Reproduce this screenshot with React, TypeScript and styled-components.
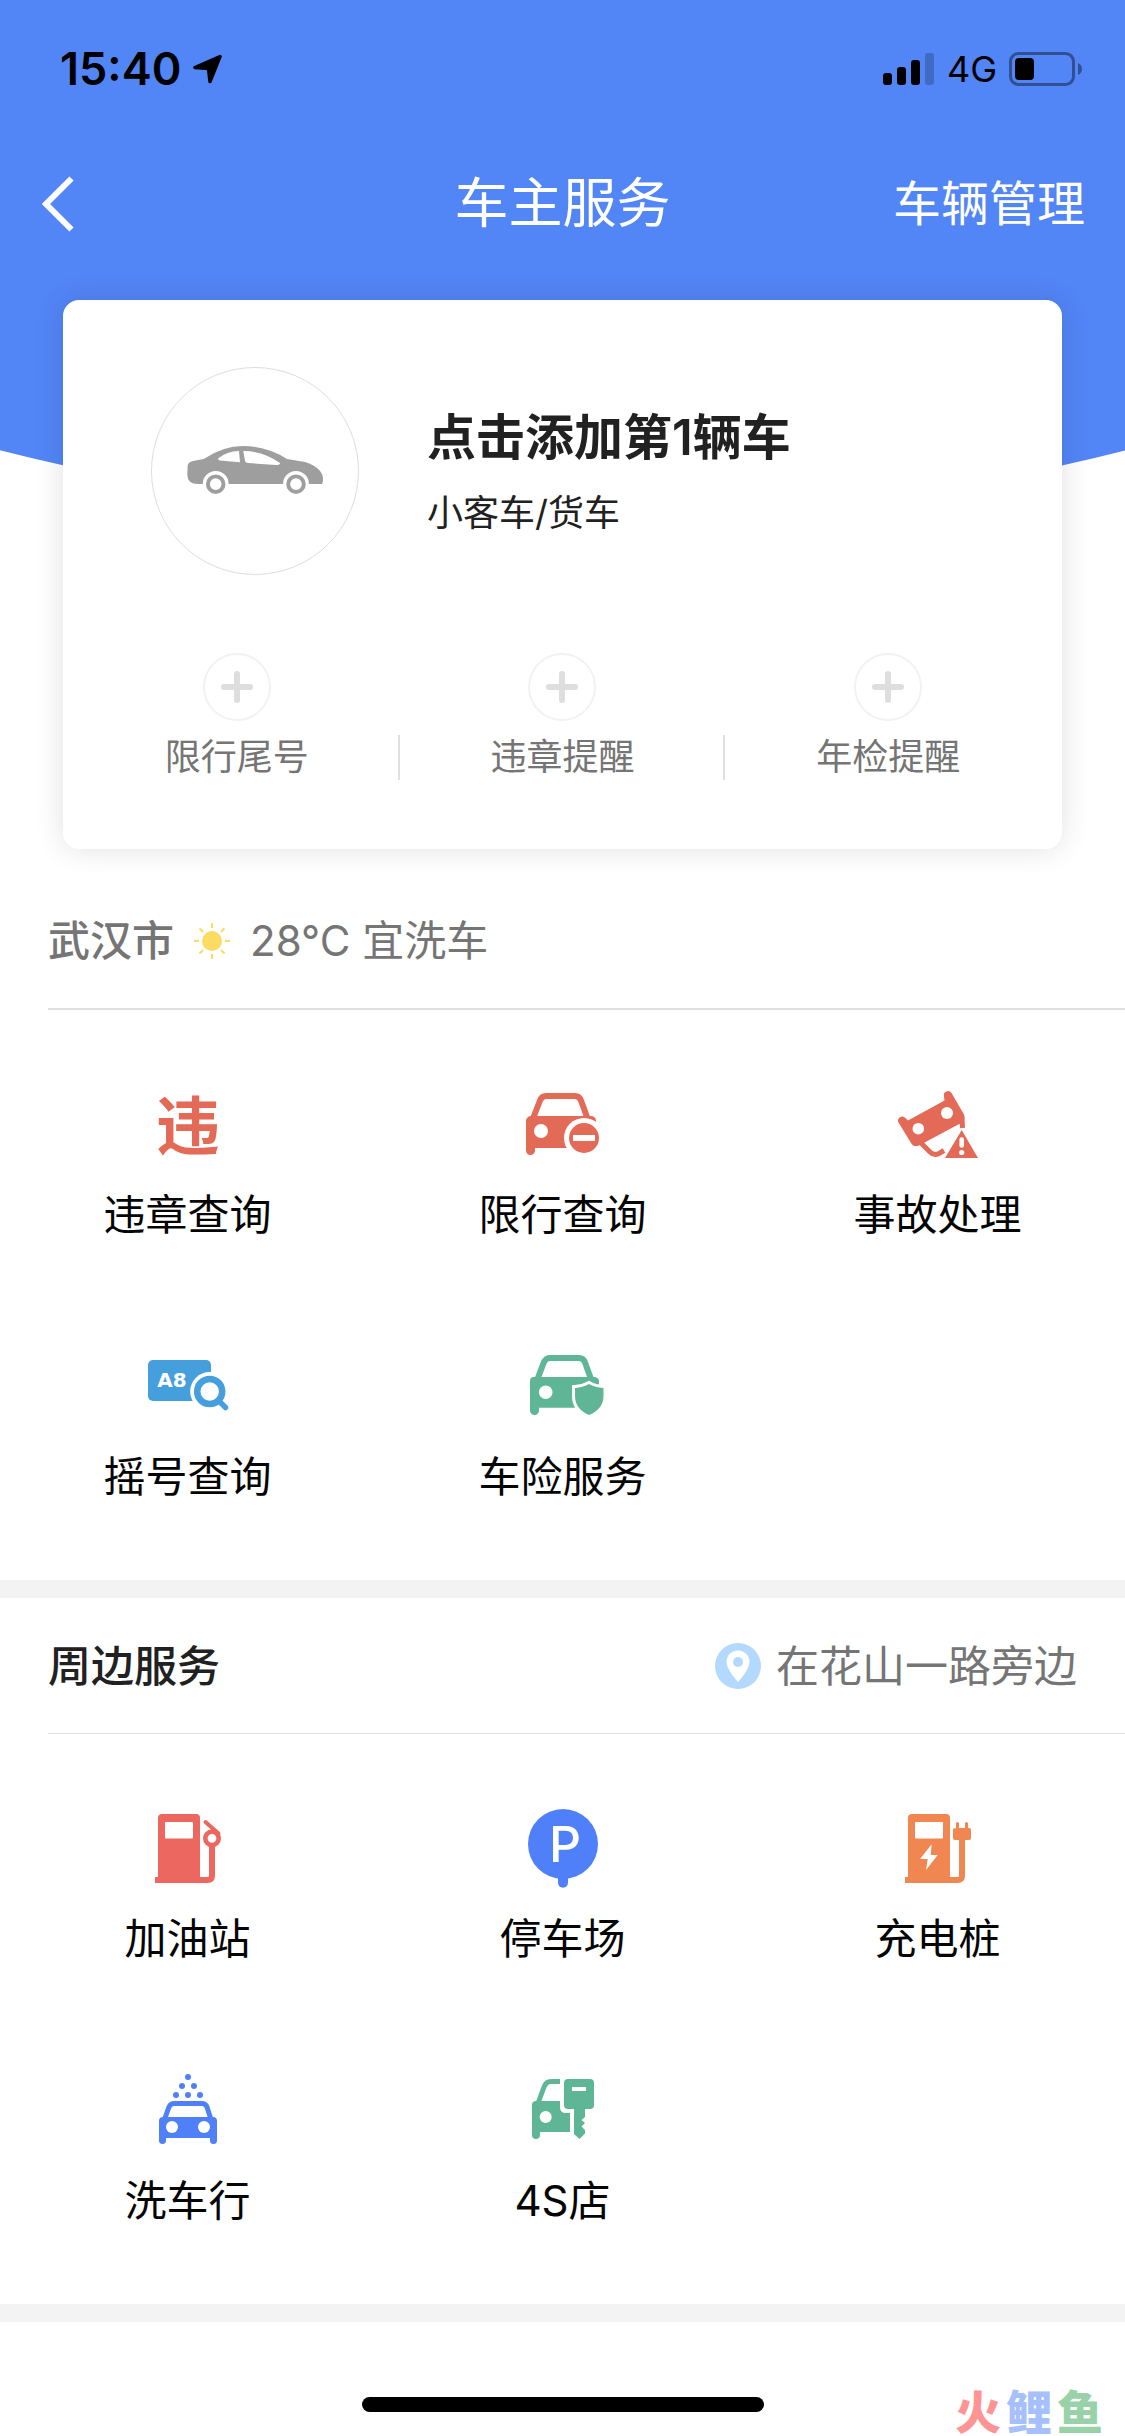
import React from "react";
import styled, { createGlobalStyle } from "styled-components";

const color = {
  brand: "#5285f6",
  ink: "#212121",
  label: "#050505",
  muted: "#757575",
  line: "#e0e0e0",
  band: "#f3f3f3",
  red: "#e26a56",
  coral: "#eb675f",
  blue: "#469fdd",
  royal: "#5080f9",
  green: "#5fb696",
  orange: "#f08650",
};

const text = {
  small: "36px",
  body: "42px",
  heading: "43px",
  action: "48px",
  large: "49px",
  title: "54px",
};

const GlobalStyle = createGlobalStyle`
  *, *::before, *::after { box-sizing: border-box; }
  body {
    margin: 0;
    background: #fff;
    color: ${color.label};
    font-family: Inter, "Noto Sans CJK SC", sans-serif;
    font-size: ${text.body};
  }
  h1, h2, p, ul { margin: 0; padding: 0; font-weight: 400; }
  ul { list-style: none; }
  svg { display: block; flex: none; }
  button {
    margin: 0;
    padding: 0;
    border: 0;
    background: none;
    color: inherit;
    font: inherit;
    cursor: pointer;
  }
  a { color: inherit; text-decoration: none; }
`;

const Hero = styled.header`
  position: relative;
  overflow: hidden;
  padding-bottom: 24px;

  &::before {
    content: "";
    position: absolute;
    z-index: -1;
    top: 0;
    left: -30%;
    right: -30%;
    height: 514px;
    border-radius: 0 0 50% 50% / 0 0 290px 290px;
    background: ${color.brand};
  }
`;

const StatusBar = styled.div`
  display: flex;
  align-items: center;
  justify-content: space-between;
  height: 138px;
  padding: 0 43px 0 60px;
  color: #000;
`;

const StatusGroup = styled.div`
  display: flex;
  align-items: center;
  gap: 12px;
`;

const Clock = styled.time`
  font-size: 45px;
  font-weight: 600;
  line-height: 60px;
`;

const Network = styled.span`
  font-size: ${text.small};
  line-height: 60px;
`;

const NavBar = styled.nav`
  display: grid;
  grid-template-columns: 1fr auto 1fr;
  align-items: center;
  height: 132px;
  padding: 0 40px;
  color: #fff;
`;

const BackButton = styled.button`
  justify-self: start;
`;

const PageTitle = styled.h1`
  font-size: ${text.title};
  line-height: 72px;
`;

const ManageButton = styled.button`
  justify-self: end;
  font-size: ${text.action};
  line-height: 72px;
`;

const Card = styled.section`
  margin: 30px 63px 0;
  padding: 67px 11px 69px;
  border-radius: 16px;
  background: #fff;
  box-shadow: 0 0 30px rgba(0, 0, 0, 0.12);
`;

const AddCar = styled.button`
  display: flex;
  align-items: center;
  gap: 68px;
  width: 100%;
  padding: 0 77px;
  text-align: left;
  color: ${color.ink};
`;

const Avatar = styled.span`
  display: grid;
  place-items: center;
  flex: none;
  width: 208px;
  height: 208px;
  border: 1px solid #dedede;
  border-radius: 50%;
`;

const AddCarText = styled.span`
  display: grid;
  gap: 12px;
`;

const AddCarTitle = styled.strong`
  font-size: ${text.large};
  font-weight: 600;
  line-height: 72px;
`;

const AddCarHint = styled.span`
  font-size: ${text.small};
  line-height: 54px;
`;

const ReminderList = styled.ul`
  display: grid;
  grid-template-columns: repeat(3, 1fr);
  margin-top: 78px;
`;

const Reminder = styled.button`
  display: flex;
  flex-direction: column;
  align-items: center;
  gap: 14px;
  width: 100%;
`;

const PlusRing = styled.span`
  display: grid;
  place-items: center;
  width: 68px;
  height: 68px;
  border: 2px solid #f2f2f2;
  border-radius: 50%;
`;

const ReminderLabel = styled.span`
  width: 100%;
  border: solid transparent;
  border-width: 0 2px;
  color: ${color.muted};
  font-size: ${text.small};
  line-height: 45px;

  li:not(:last-child) & {
    border-right-color: ${color.line};
  }
`;

const SectionHead = styled.div<{ $rule: number }>`
  display: flex;
  align-items: center;
  height: ${(p) => 135 + p.$rule}px;
  margin-left: 48px;
  padding-right: 48px;
  border-bottom: ${(p) => p.$rule}px solid ${color.line};
  line-height: 60px;
`;

const Weather = styled.div`
  display: flex;
  align-items: center;
  gap: 20px;
  color: ${color.muted};
`;

const City = styled.h2`
  font-size: ${text.body};
  font-weight: 500;
`;

const SectionTitle = styled.h2`
  flex: 1;
  color: ${color.ink};
  font-size: ${text.heading};
  font-weight: 500;
`;

const Location = styled.button`
  display: flex;
  align-items: center;
  gap: 15px;
  color: ${color.muted};
  font-size: ${text.heading};
`;

const TileGrid = styled.ul`
  display: grid;
  grid-template-columns: repeat(3, 1fr);
  padding-bottom: 46px;
`;

const Tile = styled.a`
  display: flex;
  flex-direction: column;
  align-items: center;
  gap: 12px;
  padding: 67px 0 27px;
  line-height: 60px;
`;

const GlyphIcon = styled.span`
  padding: 0 0 8px 1px;
  color: ${color.red};
  font-family: "Noto Sans CJK SC", sans-serif;
  font-size: 64px;
  font-weight: 700;
  line-height: 88px;
`;

const Band = styled.div`
  height: 18px;
  background: ${color.band};
`;

const Footer = styled.footer`
  display: grid;
  grid-template-columns: 1fr 402px 1fr;
  align-items: end;
  height: 114px;
  padding: 0 22px 24px;
`;

const HomeIndicator = styled.div`
  grid-column: 2;
  height: 15px;
  border-radius: 8px;
  background: #000;
`;

const Brand = styled.div`
  display: flex;
  justify-content: flex-end;
  gap: 5px;
  margin-bottom: -24px;
  font-size: 46px;
  font-weight: 900;
  line-height: 48px;
`;

const BrandLetter = styled.span<{ $tint: string }>`
  color: ${(p) => p.$tint};
`;

const TileSvg = ({ children }: { children: React.ReactNode }) => (
  <svg width="99" height="96" viewBox="0 0 99 96" aria-hidden="true">
    {children}
  </svg>
);

const ViolationIcon = () => <GlyphIcon aria-hidden="true">违</GlyphIcon>;

const RestrictionIcon = () => (
  <TileSvg>
    <path d="M20.600 40 27 23.500Q28.700 19 33 19H62Q66.300 19 68 23.500L74 40" fill="none" stroke={color.red} strokeWidth="6" />
    <path d="M13 44a5 5 0 0 1 5-5H79q4 1 4 5V71H22V73.500a4.500 4.500 0 0 1-9 0Z" fill={color.red} />
    <circle cx="28" cy="54" r="7" fill="#fff" />
    <circle cx="71" cy="61" r="20" fill="#fff" />
    <circle cx="71" cy="61" r="15" fill={color.red} />
    <rect x="60" y="58" width="22" height="6" fill="#fff" />
  </TileSvg>
);

const AccidentIcon = () => (
  <TileSvg>
    <path d="M33 66 42 75Q46 79 51 76.500L56 73.500M74 42 74.500 51" fill="none" stroke={color.red} strokeWidth="5" />
    <path
      d="M10.500 45.500A4.200 4.200 0 0 1 17.500 41L20 43.500 56.500 23.500 56 19.500A4.200 4.200 0 0 1 63.500 16L76 37.500Q78 42 74 45.500L31 68.500Q26.500 70.500 24 67.500Z"
      fill={color.red}
    />
    <circle cx="30.300" cy="51.700" r="5.800" fill="#fff" />
    <circle cx="59" cy="36" r="6" fill="#fff" />
    <path d="M73.700 53 90 81H57Z" fill={color.red} />
    <path d="M73.700 62.500V68.500" stroke="#fff" strokeWidth="4.600" strokeLinecap="round" />
    <circle cx="73.700" cy="75.500" r="2.600" fill="#fff" />
  </TileSvg>
);

const LotteryIcon = () => (
  <TileSvg>
    <rect x="10" y="21" width="63" height="41" rx="5" fill={color.blue} />
    <text x="34" y="48" textAnchor="middle" fontSize="20" fontWeight="700" fontFamily="DejaVu Sans, sans-serif" fill="#fff">
      A8
    </text>
    <circle cx="71.700" cy="52.500" r="19.500" fill="#fff" />
    <circle cx="71.700" cy="52.500" r="12.500" fill="none" stroke={color.blue} strokeWidth="6.500" />
    <path d="M81 62 87.500 68.500" stroke={color.blue} strokeWidth="5.500" strokeLinecap="round" />
  </TileSvg>
);

const InsuranceIcon = () => (
  <TileSvg>
    <path d="M24.500 40 31 23Q33 19 37 19H66Q70.300 19 72 23.500L78 40" fill="none" stroke={color.green} strokeWidth="6" />
    <path d="M17 42a4 4 0 0 1 4-4H82q4 1 4 4V68.700H26V71.500a4.500 4.500 0 0 1-9 0Z" fill={color.green} />
    <circle cx="32.700" cy="53.300" r="6.800" fill="#fff" />
    <path
      d="M76 45Q82 48.500 90.500 49V57Q90.500 70 76 76Q62 70 62 57V49Q70 48.500 76 45Z"
      fill={color.green}
      stroke="#fff"
      strokeWidth="6"
      paintOrder="stroke"
    />
  </TileSvg>
);

const PumpBody = ({ fill }: { fill: string }) => (
  <>
    <path d="M20 17a4 4 0 0 1 4-4H58a4 4 0 0 1 4 4V79H20Z" fill={fill} />
    <path d="M17 79H69.500Q74 79 74 74.500V39" fill="none" stroke={fill} strokeWidth="6" />
    <rect x="27" y="21" width="28" height="16.500" rx="1" fill="#fff" />
  </>
);

const GasIcon = () => (
  <TileSvg>
    <PumpBody fill={color.coral} />
    <circle cx="74" cy="37.300" r="6.700" fill="#fff" stroke={color.coral} strokeWidth="4.600" />
    <path d="M67.500 21 80.500 32.500" stroke={color.coral} strokeWidth="4" strokeLinecap="round" />
    <path d="M71 29 81 32 82 37Z" fill={color.coral} />
  </TileSvg>
);

const ParkingIcon = () => (
  <TileSvg>
    <path d="M50 70V81.700" stroke={color.royal} strokeWidth="10" strokeLinecap="round" />
    <circle cx="50" cy="43" r="35" fill={color.royal} />
    <text x="52" y="61" textAnchor="middle" fontSize="50" fontWeight="500" fontFamily="Inter, sans-serif" fill="#fff">
      P
    </text>
  </TileSvg>
);

const ChargingIcon = () => (
  <TileSvg>
    <PumpBody fill={color.orange} />
    <path d="M43.700 43.300 32 58H39.700L38 69 49.700 54H42.700Z" fill="#fff" />
    <path d="M68 28V22.500q0-1.500 1.500-1.500t1.500 1.500V27H77V22.500q0-1.500 1.500-1.500t1.500 1.500V27H81q2 0 2 2V37q0 2-2 2H67q-2 0-2-2V29q0-2 3-2Z" fill={color.orange} />
  </TileSvg>
);

const washDrops = [
  [50, 14],
  [44, 23],
  [56, 23],
  [38, 32],
  [50, 32],
  [62, 32],
];

const WashIcon = () => (
  <TileSvg>
    {washDrops.map(([x, y]) => (
      <circle key={`${x}-${y}`} cx={x} cy={y} r="3" fill={color.royal} />
    ))}
    <path d="M27 55 31 44Q32.500 40.500 36 40.500H64Q67.500 40.500 69 44L72.500 55" fill="none" stroke={color.royal} strokeWidth="5" />
    <path d="M21 58a4 4 0 0 1 4-4H75a4 4 0 0 1 4 4V77.500a3.500 3.500 0 0 1-7 0V75H28V77.500a3.500 3.500 0 0 1-7 0Z" fill={color.royal} />
    <circle cx="34" cy="64" r="6" fill="#fff" />
    <circle cx="66" cy="64" r="6" fill="#fff" />
  </TileSvg>
);

const DealerIcon = () => (
  <TileSvg>
    <path d="M25.500 39 31 24Q33 18.500 38 18.500H47" fill="none" stroke={color.green} strokeWidth="5" />
    <path d="M19 42a4 4 0 0 1 4-4H47V44Q47 50 53 50H57V69H27V72a4 4 0 0 1-8 0Z" fill={color.green} />
    <circle cx="32.700" cy="54" r="6" fill="#fff" />
    <rect x="51" y="16" width="30" height="30" rx="4" fill={color.green} />
    <path d="M61 45H72V54L68.500 57 72 60 68.500 63.500 72 67V70.500L66.500 76 61 71Z" fill={color.green} />
    <rect x="59" y="24" width="14" height="4" fill="#fff" />
  </TileSvg>
);

const SunIcon = () => (
  <svg width="36" height="38" viewBox="0 0 36 38" aria-hidden="true">
    <circle cx="18" cy="19" r="10" fill="#fadc62" />
    <path
      d="M18 1V6M18 32V37M0 19H5M31 19H36M5.500 6.500 9 10M27 28 30.500 31.500M30.500 6.500 27 10M9 28 5.500 31.500"
      stroke="#fadc62"
      strokeWidth="2"
    />
  </svg>
);

const SedanIcon = () => (
  <svg width="136" height="50" viewBox="0 0 136 50" aria-hidden="true">
    <path
      d="M0.700 19Q1.500 16 6 15L16.700 13Q36 0 56 0Q80 0 100 13L118 16Q136 22 136 33Q136 37 135 38H122A13 13 0 0 0 96 38H41.700A13 13 0 0 0 15.700 38H11Q0.500 38 0.300 29Z"
      fill="#9e9e9e"
    />
    <path d="M31 12.500Q40 5 52 5L53 16.300 33 14.500Q31 14 31 12.500ZM56.300 5Q76 5 93 17Q93 19 89 19L61 17Q58.500 17 58 15Z" fill="#fff" />
    <circle cx="28.700" cy="38.200" r="7.800" fill="none" stroke="#9e9e9e" strokeWidth="3.900" />
    <circle cx="109" cy="38.200" r="7.800" fill="none" stroke="#9e9e9e" strokeWidth="3.900" />
  </svg>
);

const PlusIcon = () => (
  <svg width="32" height="32" viewBox="0 0 32 32" aria-hidden="true">
    <path d="M16 3V29M3 16H29" stroke="#dedede" strokeWidth="6" strokeLinecap="round" />
  </svg>
);

const PinIcon = () => (
  <svg width="46" height="46" viewBox="0 0 46 46" aria-hidden="true">
    <circle cx="23" cy="23" r="23" fill="#b3d9ff" />
    <path d="M23 39Q11.500 26 11.500 19a11.500 11.500 0 0 1 23 0Q34.500 26 23 39Z" fill="#fff" />
    <circle cx="23" cy="19" r="5" fill="#b3d9ff" />
  </svg>
);

const BackIcon = () => (
  <svg width="34" height="56" viewBox="0 0 34 56" aria-hidden="true">
    <path d="M31.500 2.500 6 28 31.500 53.500" fill="none" stroke="#fff" strokeWidth="6" />
  </svg>
);

const ArrowIcon = () => (
  <svg width="30" height="30" viewBox="0 0 30 30" aria-hidden="true">
    <path d="M27 2.500 2 13.500 15.500 14.500 17 27.500Z" stroke="#000" strokeWidth="3.500" strokeLinejoin="round" />
  </svg>
);

const SignalIcon = () => (
  <svg width="52" height="33" viewBox="0 0 52 33" aria-hidden="true">
    <rect x="0" y="20" width="9" height="12" rx="3" />
    <rect x="14" y="14" width="9" height="18" rx="3" />
    <rect x="28" y="7" width="9" height="25" rx="3" />
    <rect x="42" y="0" width="9" height="32" rx="3" opacity="0.2" />
  </svg>
);

const BatteryIcon = () => (
  <svg width="73" height="34" viewBox="0 0 73 34" aria-hidden="true">
    <rect x="1.500" y="1.500" width="63" height="31" rx="8" fill="none" stroke="#000" strokeWidth="3" opacity="0.4" />
    <path d="M69 11Q73 13 73 17T69 23Z" opacity="0.4" />
    <rect x="6" y="6" width="19" height="22" rx="4" />
  </svg>
);

type Service = { name: string; Icon: React.ComponentType };

const queries: Service[] = [
  { name: "违章查询", Icon: ViolationIcon },
  { name: "限行查询", Icon: RestrictionIcon },
  { name: "事故处理", Icon: AccidentIcon },
  { name: "摇号查询", Icon: LotteryIcon },
  { name: "车险服务", Icon: InsuranceIcon },
];

const nearby: Service[] = [
  { name: "加油站", Icon: GasIcon },
  { name: "停车场", Icon: ParkingIcon },
  { name: "充电桩", Icon: ChargingIcon },
  { name: "洗车行", Icon: WashIcon },
  { name: "4S店", Icon: DealerIcon },
];

const reminders = ["限行尾号", "违章提醒", "年检提醒"];

const ServiceGrid = ({ items }: { items: Service[] }) => (
  <TileGrid>
    {items.map(({ name, Icon }) => (
      <li key={name}>
        <Tile href="#">
          <Icon />
          {name}
        </Tile>
      </li>
    ))}
  </TileGrid>
);

export default function App() {
  return (
    <>
      <GlobalStyle />
      <Hero>
        <StatusBar>
          <StatusGroup>
            <Clock>15:40</Clock>
            <ArrowIcon />
          </StatusGroup>
          <StatusGroup>
            <SignalIcon />
            <Network>4G</Network>
            <BatteryIcon />
          </StatusGroup>
        </StatusBar>
        <NavBar>
          <BackButton aria-label="返回">
            <BackIcon />
          </BackButton>
          <PageTitle>车主服务</PageTitle>
          <ManageButton>车辆管理</ManageButton>
        </NavBar>
        <Card>
          <AddCar>
            <Avatar>
              <SedanIcon />
            </Avatar>
            <AddCarText>
              <AddCarTitle>点击添加第1辆车</AddCarTitle>
              <AddCarHint>小客车/货车</AddCarHint>
            </AddCarText>
          </AddCar>
          <ReminderList>
            {reminders.map((name) => (
              <li key={name}>
                <Reminder>
                  <PlusRing>
                    <PlusIcon />
                  </PlusRing>
                  <ReminderLabel>{name}</ReminderLabel>
                </Reminder>
              </li>
            ))}
          </ReminderList>
        </Card>
      </Hero>
      <main>
        <section>
          <SectionHead $rule={2}>
            <Weather>
              <City>武汉市</City>
              <SunIcon />
              <span>28°C 宜洗车</span>
            </Weather>
          </SectionHead>
          <ServiceGrid items={queries} />
        </section>
        <Band />
        <section>
          <SectionHead $rule={1}>
            <SectionTitle>周边服务</SectionTitle>
            <Location>
              <PinIcon />
              在花山一路旁边
            </Location>
          </SectionHead>
          <ServiceGrid items={nearby} />
        </section>
        <Band />
      </main>
      <Footer>
        <HomeIndicator />
        <Brand>
          <BrandLetter $tint="#ff9494">火</BrandLetter>
          <BrandLetter $tint="#a6c0fd">鲤</BrandLetter>
          <BrandLetter $tint="#99d2a8">鱼</BrandLetter>
        </Brand>
      </Footer>
    </>
  );
}
